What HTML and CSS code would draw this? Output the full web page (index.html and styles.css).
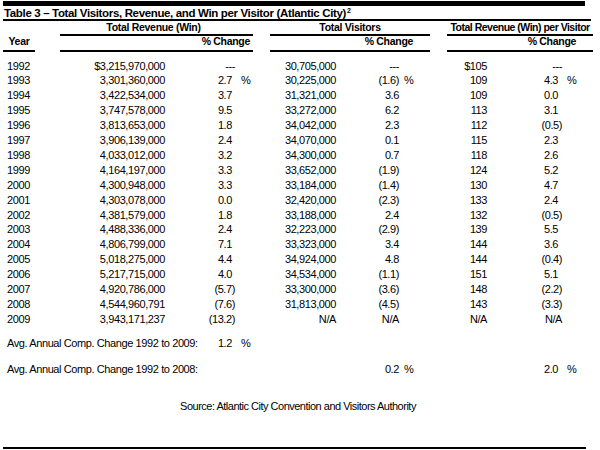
FILE: index.html
```html
<!DOCTYPE html>
<html lang="en">
<head>
<meta charset="utf-8">
<title>Table 3 – Total Visitors, Revenue, and Win per Visitor</title>
<link rel="stylesheet" href="styles.css">
</head>
<body>
<div class="page">
  <div class="topbar"></div>
  <div class="title">Table 3 – Total Visitors, Revenue, and Win per Visitor (Atlantic City)<sup>2</sup></div>
  <table class="data">
    <colgroup>
      <col class="c-year"><col class="c-sp1"><col class="c-rev"><col class="c-rpn"><col class="c-rps">
      <col class="c-sp2"><col class="c-vis"><col class="c-vpn"><col class="c-vps">
      <col class="c-sp3"><col class="c-pv"><col class="c-ppn"><col class="c-pps">
    </colgroup>
    <thead>
      <tr class="h1">
        <th colspan="2"></th>
        <th colspan="3" class="grp grp-rev">Total Revenue (Win)</th>
        <th></th>
        <th colspan="3" class="grp">Total Visitors</th>
        <th></th>
        <th colspan="3" class="grp grp-pv">Total Revenue (Win) per Visitor</th>
      </tr>
      <tr class="h2">
        <th class="grp year">Year</th>
        <th></th>
        <th colspan="3" class="grp pc pc-rev">% Change</th>
        <th></th>
        <th colspan="3" class="grp pc pc-vis">% Change</th>
        <th></th>
        <th colspan="3" class="grp pc pc-pv">% Change</th>
      </tr>
    </thead>
    <tbody class="years">
      <tr><td class="yr">1992</td><td></td><td class="num">$3,215,970,000</td><td class="num">---</td><td></td><td></td><td class="num">30,705,000</td><td class="num">---</td><td></td><td></td><td class="num">$105</td><td class="num">---</td><td></td></tr>
      <tr><td class="yr">1993</td><td></td><td class="num">3,301,360,000</td><td class="num pos-r">2.7</td><td class="pct pct-r">%</td><td></td><td class="num">30,225,000</td><td class="num">(1.6)</td><td class="pct">%</td><td></td><td class="num">109</td><td class="num pos-p">4.3</td><td class="pct">%</td></tr>
      <tr><td class="yr">1994</td><td></td><td class="num">3,422,534,000</td><td class="num pos-r">3.7</td><td></td><td></td><td class="num">31,321,000</td><td class="num">3.6</td><td></td><td></td><td class="num">109</td><td class="num pos-p">0.0</td><td></td></tr>
      <tr><td class="yr">1995</td><td></td><td class="num">3,747,578,000</td><td class="num pos-r">9.5</td><td></td><td></td><td class="num">33,272,000</td><td class="num">6.2</td><td></td><td></td><td class="num">113</td><td class="num pos-p">3.1</td><td></td></tr>
      <tr><td class="yr">1996</td><td></td><td class="num">3,813,653,000</td><td class="num pos-r">1.8</td><td></td><td></td><td class="num">34,042,000</td><td class="num">2.3</td><td></td><td></td><td class="num">112</td><td class="num">(0.5)</td><td></td></tr>
      <tr><td class="yr">1997</td><td></td><td class="num">3,906,139,000</td><td class="num pos-r">2.4</td><td></td><td></td><td class="num">34,070,000</td><td class="num">0.1</td><td></td><td></td><td class="num">115</td><td class="num pos-p">2.3</td><td></td></tr>
      <tr><td class="yr">1998</td><td></td><td class="num">4,033,012,000</td><td class="num pos-r">3.2</td><td></td><td></td><td class="num">34,300,000</td><td class="num">0.7</td><td></td><td></td><td class="num">118</td><td class="num pos-p">2.6</td><td></td></tr>
      <tr><td class="yr">1999</td><td></td><td class="num">4,164,197,000</td><td class="num pos-r">3.3</td><td></td><td></td><td class="num">33,652,000</td><td class="num">(1.9)</td><td></td><td></td><td class="num">124</td><td class="num pos-p">5.2</td><td></td></tr>
      <tr><td class="yr">2000</td><td></td><td class="num">4,300,948,000</td><td class="num pos-r">3.3</td><td></td><td></td><td class="num">33,184,000</td><td class="num">(1.4)</td><td></td><td></td><td class="num">130</td><td class="num pos-p">4.7</td><td></td></tr>
      <tr><td class="yr">2001</td><td></td><td class="num">4,303,078,000</td><td class="num pos-r">0.0</td><td></td><td></td><td class="num">32,420,000</td><td class="num">(2.3)</td><td></td><td></td><td class="num">133</td><td class="num pos-p">2.4</td><td></td></tr>
      <tr><td class="yr">2002</td><td></td><td class="num">4,381,579,000</td><td class="num pos-r">1.8</td><td></td><td></td><td class="num">33,188,000</td><td class="num">2.4</td><td></td><td></td><td class="num">132</td><td class="num">(0.5)</td><td></td></tr>
      <tr><td class="yr">2003</td><td></td><td class="num">4,488,336,000</td><td class="num pos-r">2.4</td><td></td><td></td><td class="num">32,223,000</td><td class="num">(2.9)</td><td></td><td></td><td class="num">139</td><td class="num pos-p">5.5</td><td></td></tr>
      <tr><td class="yr">2004</td><td></td><td class="num">4,806,799,000</td><td class="num pos-r">7.1</td><td></td><td></td><td class="num">33,323,000</td><td class="num">3.4</td><td></td><td></td><td class="num">144</td><td class="num pos-p">3.6</td><td></td></tr>
      <tr><td class="yr">2005</td><td></td><td class="num">5,018,275,000</td><td class="num pos-r">4.4</td><td></td><td></td><td class="num">34,924,000</td><td class="num">4.8</td><td></td><td></td><td class="num">144</td><td class="num">(0.4)</td><td></td></tr>
      <tr><td class="yr">2006</td><td></td><td class="num">5,217,715,000</td><td class="num pos-r">4.0</td><td></td><td></td><td class="num">34,534,000</td><td class="num">(1.1)</td><td></td><td></td><td class="num">151</td><td class="num pos-p">5.1</td><td></td></tr>
      <tr><td class="yr">2007</td><td></td><td class="num">4,920,786,000</td><td class="num">(5.7)</td><td></td><td></td><td class="num">33,300,000</td><td class="num">(3.6)</td><td></td><td></td><td class="num">148</td><td class="num">(2.2)</td><td></td></tr>
      <tr><td class="yr">2008</td><td></td><td class="num">4,544,960,791</td><td class="num">(7.6)</td><td></td><td></td><td class="num">31,813,000</td><td class="num">(4.5)</td><td></td><td></td><td class="num">143</td><td class="num">(3.3)</td><td></td></tr>
      <tr><td class="yr">2009</td><td></td><td class="num">3,943,171,237</td><td class="num">(13.2)</td><td></td><td></td><td class="num">N/A</td><td class="num">N/A</td><td></td><td></td><td class="num">N/A</td><td class="num">N/A</td><td></td></tr>
    </tbody>
    <tbody class="avgs">
      <tr class="avg1"><td colspan="3" class="label">Avg. Annual Comp. Change 1992 to 2009:</td><td class="num pos-r">1.2</td><td class="pct pct-r">%</td><td colspan="8"></td></tr>
      <tr class="avg2"><td colspan="3" class="label">Avg. Annual Comp. Change 1992 to 2008:</td><td></td><td></td><td></td><td></td><td class="num">0.2</td><td class="pct">%</td><td></td><td></td><td class="num pos-p">2.0</td><td class="pct">%</td></tr>
    </tbody>
  </table>
  <p class="source">Source: Atlantic City Convention and Visitors Authority</p>
  <div class="bottom-rule"></div>
</div>
</body>
</html>
```
FILE: styles.css
```css
html, body {
  margin: 0;
  padding: 0;
  background: #fff;
}

.page {
  padding: 1px 0 0 3px;
  width: 590px;
  font-family: "Liberation Sans", Arial, sans-serif;
  color: #000;
}

.topbar {
  width: 582px;
  height: 5px;
  background: #000;
}

.title {
  width: 588px;
  height: 15px;
  line-height: 15px;
  font-weight: bold;
  font-size: 11.5px;
  letter-spacing: -0.35px;
  padding-left: 1px;
  box-sizing: border-box;
  border-bottom: 2px solid #000;
  white-space: nowrap;
}

.title sup {
  font-size: 7px;
  line-height: 0;
  vertical-align: 4px;
  letter-spacing: 0;
  padding-left: 1px;
}

.data {
  table-layout: fixed;
  width: 590px;
  border-collapse: separate;
  border-spacing: 0;
}

.c-year { width: 32px; }
.c-sp1 { width: 25px; }
.c-rev { width: 105px; }
.c-rpn { width: 70px; }
.c-rps { width: 18px; }
.c-sp2 { width: 17px; }
.c-vis { width: 66px; }
.c-vpn { width: 63px; }
.c-vps { width: 31px; }
.c-sp3 { width: 17px; }
.c-pv { width: 40px; }
.c-ppn { width: 75px; }
.c-pps { width: 31px; }

.data th {
  padding: 0;
  font-size: 10.5px;
  line-height: 11px;
  font-weight: bold;
  letter-spacing: -0.3px;
  white-space: nowrap;
}

.data .grp {
  border-bottom: 2px solid #000;
}

.h1 th {
  padding-top: 1px;
  padding-bottom: 1px;
  text-align: center;
}

.h1 .grp-rev {
  padding-right: 6px;
}

.h1 .grp-pv {
  letter-spacing: -0.5px;
}

.h2 th {
  padding-bottom: 3px;
}

.h2 .year { text-align: center; }
.h2 .pc { text-align: right; }
.h2 .pc-rev { padding-right: 3px; }
.h2 .pc-vis { padding-right: 17px; }
.h2 .pc-pv { padding-right: 17px; }

.data td {
  padding: 0;
  font-size: 11px;
  line-height: 14.9px;
  letter-spacing: -0.4px;
  white-space: nowrap;
}

.years tr:first-child td {
  padding-top: 6.5px;
}

.data .yr,
.data .label {
  padding-left: 4px;
  text-align: left;
  overflow: visible;
}

.data .num { text-align: right; }
.data .pos-r { padding-right: 3px; }
.data .pos-p { padding-right: 4px; }

.data .pct { padding-left: 5px; }
.data .pct-r { padding-left: 6px; }

.avg1 td { padding-top: 9.2px; }
.avg2 td { padding-top: 11.1px; }

.source {
  margin: 22.4px 0 0;
  width: 590px;
  text-align: center;
  font-size: 11px;
  line-height: 14.6px;
  letter-spacing: -0.5px;
}

.bottom-rule {
  margin-top: 33px;
  width: 583px;
  height: 2px;
  background: #000;
}
```
